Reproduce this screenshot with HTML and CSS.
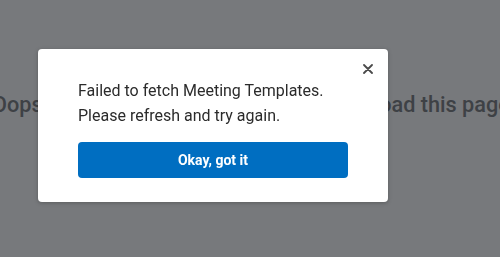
FILE: index.html
```html
<!DOCTYPE html>
<html lang="en">
<head>
    <meta charset="UTF-8">
    <meta name="viewport" content="width=device-width, initial-scale=1.0">
    <title>Meeting Templates</title>
    <link rel="stylesheet" href="styles.css">
</head>
<body>
    <div class="page">
        <p class="page-error">Oops, something went wrong. Failed to load this page.</p>
    </div>

    <div class="overlay">
        <div class="dialog" role="dialog">
            <button class="dialog-close" aria-label="Close">
                <svg width="10" height="10" viewBox="0 0 10 10">
                    <path d="M1 1 L9 9 M9 1 L1 9" stroke="#4a4a4a" stroke-width="1.8" stroke-linecap="round"/>
                </svg>
            </button>
            <p class="dialog-text">Failed to fetch Meeting Templates.<br>Please refresh and try again.</p>
            <button class="dialog-btn">Okay, got it</button>
        </div>
    </div>
</body>
</html>
```

FILE: styles.css
```css
*{
    padding:0;
    margin:0;
    box-sizing: border-box;
    font-family: Roboto, "Liberation Sans", sans-serif;
}
body{
    width:100vw;
    height:100vh;
    overflow: hidden;
    background-color: #fff;
}
.page{
    display: flex;
    justify-content: center;
    padding: 92px 0 0 8px;
}
.page-error{
    white-space: nowrap;
    font-size: 21.7px;
    font-weight: 500;
    line-height: 26px;
    color: #65676b;
}
.overlay{
    position: fixed;
    inset: 0;
    background-color: rgba(40, 43, 48, 0.63);
    padding: 49px 0 0 38px;
}
.dialog{
    position: relative;
    width: 350px;
    height: 153px;
    background-color: #fff;
    border-radius: 4px;
    box-shadow: 0px 1px 4px rgba(0,0,0,0.25);
    padding: 29px 40px 0 40px;
    display: flex;
    flex-direction: column;
}
.dialog-close{
    position: absolute;
    top: 14px;
    right: 14px;
    width: 12px;
    height: 12px;
    border: none;
    background: none;
    display: flex;
    align-items: center;
    justify-content: center;
    cursor: pointer;
}
.dialog-text{
    font-size: 16px;
    line-height: 25px;
    color: #2b2b2b;
}
.dialog-btn{
    margin-top: 14px;
    height: 36px;
    width: 100%;
    border: none;
    border-radius: 4px;
    background-color: #006ec1;
    color: #fff;
    font-size: 14px;
    font-weight: 700;
    cursor: pointer;
}
```
